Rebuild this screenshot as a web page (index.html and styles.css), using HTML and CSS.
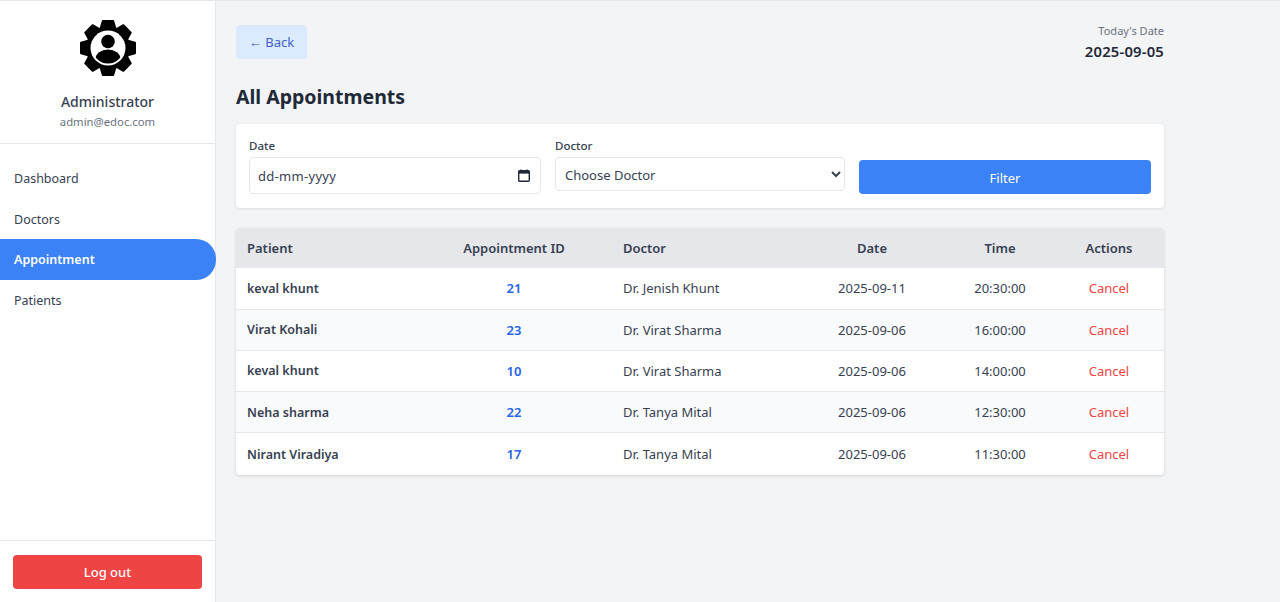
FILE: index.html
```html
<!DOCTYPE html>
<html lang="en">
<head>
    <meta charset="UTF-8">
    <meta name="viewport" content="width=device-width, initial-scale=1.0">
    <title>All Appointments</title>
    <link rel="stylesheet" href="styles.css">
</head>
<body>
    <div class="layout">
        <aside class="sidebar">
            <div class="profile">
                <svg class="profile-icon" viewBox="0 0 56 56" width="56" height="56">
                    <defs>
                        <clipPath id="ringClip"><circle cx="28" cy="28" r="15.5"/></clipPath>
                        <path id="tooth" d="M22.8 1h10.4l2.6 9h-15.6z" fill="#000" stroke="#000" stroke-width="2" stroke-linejoin="round"/>
                    </defs>
                    <use href="#tooth"/>
                    <use href="#tooth" transform="rotate(45 28 28)"/>
                    <use href="#tooth" transform="rotate(90 28 28)"/>
                    <use href="#tooth" transform="rotate(135 28 28)"/>
                    <use href="#tooth" transform="rotate(180 28 28)"/>
                    <use href="#tooth" transform="rotate(225 28 28)"/>
                    <use href="#tooth" transform="rotate(270 28 28)"/>
                    <use href="#tooth" transform="rotate(315 28 28)"/>
                    <circle cx="28" cy="28" r="22" fill="#000"/>
                    <circle cx="28" cy="28" r="17.5" fill="#fff"/>
                    <circle cx="28" cy="21.5" r="6.8" fill="#000"/>
                    <ellipse cx="28" cy="39" rx="12.5" ry="9.5" fill="#000" clip-path="url(#ringClip)"/>
                </svg>
                <div class="profile-name">Administrator</div>
                <div class="profile-mail">admin@edoc.com</div>
            </div>
            <nav class="menu">
                <a class="menu-item" href="#">Dashboard</a>
                <a class="menu-item" href="#">Doctors</a>
                <a class="menu-item active" href="#">Appointment</a>
                <a class="menu-item" href="#">Patients</a>
            </nav>
            <div class="logout">
                <button class="logout-btn" type="button">Log out</button>
            </div>
        </aside>

        <main class="content">
            <div class="topbar">
                <a class="back-btn" href="#">← Back</a>
                <div class="today">
                    <div class="today-label">Today's Date</div>
                    <div class="today-value">2025-09-05</div>
                </div>
            </div>

            <h1 class="title">All Appointments</h1>

            <form class="filter-card">
                <div class="field">
                    <label for="date">Date</label>
                    <div class="date-box">
                        <input class="date-text" type="text" id="date" placeholder="dd-mm-yyyy">
                        <svg class="date-icon" viewBox="0 0 12 13" width="12" height="13">
                            <path d="M3 0.5v2M9 0.5v2" stroke="#1f2937" stroke-width="1.4" fill="none"/>
                            <rect x="0.7" y="1.7" width="10.6" height="10.6" rx="1" stroke="#1f2937" stroke-width="1.4" fill="none"/>
                            <rect x="0.7" y="2" width="10.6" height="2.6" fill="#1f2937"/>
                        </svg>
                    </div>
                </div>
                <div class="field">
                    <label for="doctor">Doctor</label>
                    <select class="doctor-box" id="doctor">
                        <option>Choose Doctor</option>
                    </select>
                </div>
                <button class="filter-btn" type="button">Filter</button>
            </form>

            <div class="table-card">
                <table>
                    <thead>
                        <tr>
                            <th class="col-patient">Patient</th>
                            <th class="col-id center">Appointment ID</th>
                            <th class="col-doctor">Doctor</th>
                            <th class="col-date center">Date</th>
                            <th class="col-time center">Time</th>
                            <th class="center">Actions</th>
                        </tr>
                    </thead>
                    <tbody>
                        <tr>
                            <td class="patient">keval khunt</td>
                            <td class="appt center">21</td>
                            <td>Dr. Jenish Khunt</td>
                            <td class="center">2025-09-11</td>
                            <td class="center">20:30:00</td>
                            <td class="center"><a class="cancel" href="#">Cancel</a></td>
                        </tr>
                        <tr>
                            <td class="patient">Virat Kohali</td>
                            <td class="appt center">23</td>
                            <td>Dr. Virat Sharma</td>
                            <td class="center">2025-09-06</td>
                            <td class="center">16:00:00</td>
                            <td class="center"><a class="cancel" href="#">Cancel</a></td>
                        </tr>
                        <tr>
                            <td class="patient">keval khunt</td>
                            <td class="appt center">10</td>
                            <td>Dr. Virat Sharma</td>
                            <td class="center">2025-09-06</td>
                            <td class="center">14:00:00</td>
                            <td class="center"><a class="cancel" href="#">Cancel</a></td>
                        </tr>
                        <tr>
                            <td class="patient">Neha sharma</td>
                            <td class="appt center">22</td>
                            <td>Dr. Tanya Mital</td>
                            <td class="center">2025-09-06</td>
                            <td class="center">12:30:00</td>
                            <td class="center"><a class="cancel" href="#">Cancel</a></td>
                        </tr>
                        <tr>
                            <td class="patient">Nirant Viradiya</td>
                            <td class="appt center">17</td>
                            <td>Dr. Tanya Mital</td>
                            <td class="center">2025-09-06</td>
                            <td class="center">11:30:00</td>
                            <td class="center"><a class="cancel" href="#">Cancel</a></td>
                        </tr>
                    </tbody>
                </table>
            </div>
        </main>
    </div>
</body>
</html>
```

FILE: styles.css
```css
* {
    box-sizing: border-box;
}

body {
    font-family: "Noto Sans", "Open Sans", sans-serif;
    background-color: #f3f4f6;
    color: #1f2937;
    margin: 0;
    height: 602px;
    overflow: hidden;
    border-top: 1px solid #e5e7eb;
}

a {
    text-decoration: none;
}

.layout {
    display: flex;
    height: 601px;
}

/* sidebar */
.sidebar {
    width: 216px;
    flex-shrink: 0;
    background-color: #fff;
    border-right: 1px solid #e5e7eb;
    display: flex;
    flex-direction: column;
}

.profile {
    height: 143px;
    border-bottom: 1px solid #e5e7eb;
    padding-top: 19px;
    text-align: center;
}

.profile-icon {
    display: block;
    margin: 0 auto 16px;
}

.profile-name {
    font-size: 14px;
    font-weight: 500;
    line-height: 20px;
    color: #374151;
}

.profile-mail {
    font-size: 11.3px;
    line-height: 20px;
    color: #6b7280;
}

.menu {
    flex: 1;
    padding-top: 14px;
    display: flex;
    flex-direction: column;
}

.menu-item {
    display: block;
    height: 40.5px;
    line-height: 42px;
    padding-left: 14px;
    margin-right: -1px;
    font-size: 12.5px;
    color: #374151;
}

.menu-item.active {
    background-color: #3b82f6;
    color: #fff;
    font-weight: 600;
    border-radius: 0 20px 20px 0;
}

.logout {
    border-top: 1px solid #e5e7eb;
    height: 62px;
    padding: 14px 13px 0;
}

.logout-btn {
    width: 100%;
    height: 34px;
    border: none;
    border-radius: 4px;
    background-color: #ef4444;
    color: #fff;
    font-family: inherit;
    font-size: 13px;
    font-weight: 500;
}

/* main part */
.content {
    width: 948px;
    padding: 24px 0 0 20px;
}

.topbar {
    display: flex;
    justify-content: space-between;
    align-items: flex-start;
    height: 34px;
}

.back-btn {
    display: block;
    width: 71px;
    height: 34px;
    line-height: 34px;
    text-align: center;
    background-color: #dbeafe;
    border-radius: 4px;
    font-size: 13px;
    color: #3f5fc8;
}

.today {
    margin-top: -1px;
    text-align: right;
}

.today-label {
    font-size: 11px;
    line-height: 14px;
    color: #6b7280;
}

.today-value {
    font-size: 14.8px;
    font-weight: 600;
    line-height: 20px;
    margin-top: 3px;
    letter-spacing: 0.2px;
    color: #1f2937;
}

.title {
    font-size: 19.5px;
    font-weight: 700;
    line-height: 28px;
    margin: 24px 0 13px;
    color: #1f2937;
}

.filter-card {
    display: flex;
    align-items: flex-start;
    gap: 14px;
    height: 84px;
    padding: 14px 13px 0 13px;
    background-color: #fff;
    border-radius: 4px;
    box-shadow: 0 1px 3px rgba(0, 0, 0, 0.1);
}

.field {
    display: flex;
    flex-direction: column;
}

.field label {
    font-size: 11.5px;
    font-weight: 500;
    line-height: 16px;
    margin-bottom: 3px;
    color: #374151;
}

.date-box {
    display: flex;
    align-items: center;
    width: 292px;
    height: 37px;
    padding: 0 10px 0 8px;
    border: 1px solid #e5e7eb;
    border-radius: 4px;
    background-color: #fff;
}

.date-text {
    flex: 1;
    min-width: 0;
    border: none;
    padding: 0;
    outline: none;
    font-family: inherit;
    font-size: 13px;
    letter-spacing: 0.3px;
}

.date-text::placeholder {
    color: #374151;
    opacity: 1;
}

.date-icon {
    flex-shrink: 0;
}

.doctor-box {
    width: 290px;
    height: 34px;
    padding: 2px 5px 0;
    border: 1px solid #e5e7eb;
    border-radius: 4px;
    background-color: #fff;
    font-family: inherit;
    font-size: 13px;
    color: #374151;
}

.filter-btn {
    width: 292px;
    height: 34px;
    margin-top: 22px;
    padding-top: 2px;
    border: none;
    border-radius: 4px;
    background-color: #3b82f6;
    color: #fff;
    font-family: inherit;
    font-size: 13px;
}

.table-card {
    margin-top: 20px;
    background-color: #fff;
    border-radius: 4px;
    overflow: hidden;
    box-shadow: 0 1px 3px rgba(0, 0, 0, 0.15);
}

table {
    width: 100%;
    border-collapse: collapse;
    table-layout: fixed;
}

th {
    height: 40px;
    padding: 0 11px;
    background-color: #e5e7eb;
    font-size: 13px;
    font-weight: 600;
    text-align: left;
    color: #374151;
}

td {
    height: 41.2px;
    padding: 0 11px;
    font-size: 13px;
    color: #374151;
    border-top: 1px solid #e5e7eb;
}

tbody tr:first-child td {
    border-top: none;
}

tbody tr:last-child td {
    height: 42px;
}

tbody tr:nth-child(even) {
    background-color: #f9fafb;
}

.col-patient {
    width: 180px;
}

.col-id {
    width: 196px;
}

.col-doctor {
    width: 186px;
}

.col-date {
    width: 148px;
}

.col-time {
    width: 108px;
}

.center {
    text-align: center;
}

.patient {
    font-size: 12.5px;
    font-weight: 600;
}

.appt {
    font-weight: 600;
    color: #2563eb;
}

.cancel {
    color: #ef4444;
}
```
